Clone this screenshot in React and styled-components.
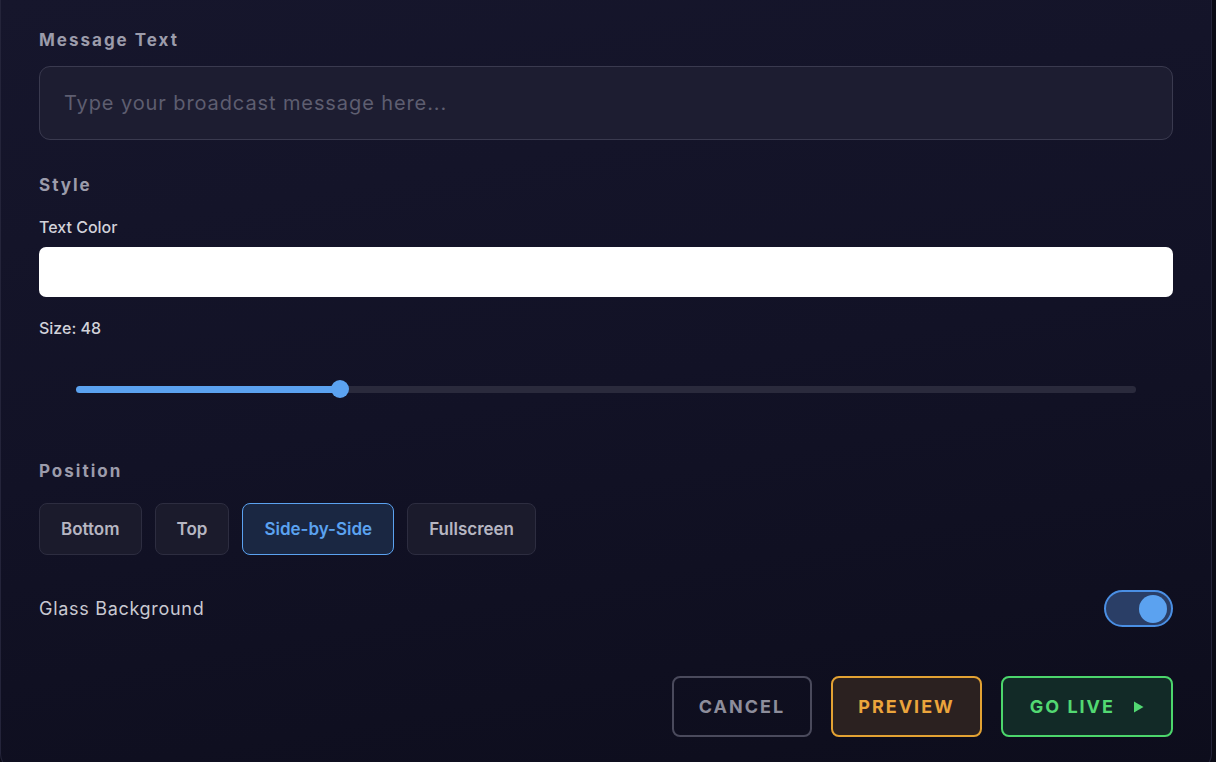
import React, { useState } from "react";
import styled, { createGlobalStyle } from "styled-components";

const GlobalStyle = createGlobalStyle`
  html, body {
    margin: 0;
    padding: 0;
    background: #0b0b16;
    font-family: Inter, "Noto Sans", "Liberation Sans", sans-serif;
  }
  * { box-sizing: border-box; }
`;

const Page = styled.div`
  width: 1216px;
  height: 762px;
  overflow: hidden;
  background: #0b0b16;
`;

const Panel = styled.div`
  width: 1212px;
  height: 770px;
  padding: 29px 38px 0 38px;
  background: linear-gradient(170deg, #16162c 0%, #121226 50%, #0d0d1c 100%);
  border: 1px solid #24243a;
  border-top: none;
  border-radius: 0 0 16px 16px;
  display: flex;
  flex-direction: column;
`;

const SectionLabel = styled.div`
  font-size: 17px;
  font-weight: 700;
  letter-spacing: 2px;
  color: #9c9cab;
  line-height: 22px;
  margin-top: ${(p) => p.$top || 0}px;
`;

const MessageInput = styled.input`
  margin-top: 15px;
  height: 74px;
  width: 100%;
  padding: 0 24px;
  border-radius: 11px;
  border: 1px solid #3a3a4f;
  background: #1d1d31;
  color: #e6e6ee;
  font-family: inherit;
  font-size: 20px;
  letter-spacing: 0.9px;
  outline: none;

  &::placeholder {
    color: #5e5e70;
  }
`;

const FieldLabel = styled.div`
  font-size: 16px;
  font-weight: 500;
  color: #d2d2da;
  line-height: 20px;
  margin-top: ${(p) => p.$top || 0}px;
`;

const ColorSwatch = styled.div`
  margin-top: 10px;
  height: 50px;
  width: 100%;
  border-radius: 7px;
  background: ${(p) => p.$color};
`;

const SliderWrap = styled.div`
  padding: 0 37px;
  margin-top: 31px;
  height: 40px;
  display: flex;
  align-items: center;
`;

const Range = styled.input`
  -webkit-appearance: none;
  appearance: none;
  width: 100%;
  height: 20px;
  margin: 0;
  background: transparent;
  outline: none;

  &::-webkit-slider-runnable-track {
    height: 7px;
    border-radius: 4px;
    background: linear-gradient(
      to right,
      #5ba2f0 0%,
      #5ba2f0 var(--fill),
      #2a2a3c var(--fill),
      #2a2a3c 100%
    );
  }

  &::-webkit-slider-thumb {
    -webkit-appearance: none;
    width: 18px;
    height: 18px;
    margin-top: -5.5px;
    border-radius: 50%;
    background: #5ba2f0;
    border: none;
  }
`;

const ButtonRow = styled.div`
  display: flex;
  gap: 13px;
  margin-top: 21px;
`;

const PositionButton = styled.button`
  height: 52px;
  padding: 0 21px;
  border-radius: 8px;
  font-family: inherit;
  font-size: 17px;
  font-weight: 600;
  cursor: pointer;
  border: 1px solid ${(p) => (p.$active ? "#5ba2f0" : "#2d2d40")};
  background: ${(p) => (p.$active ? "#1a2742" : "#1b1b2c")};
  color: ${(p) => (p.$active ? "#5ba2f0" : "#b6b6c2")};
`;

const ToggleRow = styled.div`
  display: flex;
  align-items: center;
  justify-content: space-between;
  margin-top: 35px;
`;

const ToggleLabel = styled.span`
  font-size: 18px;
  letter-spacing: 0.7px;
  color: #c9c9d2;
`;

const Switch = styled.button`
  width: 69px;
  height: 37px;
  border-radius: 19px;
  border: 2px solid ${(p) => (p.$on ? "#4a8fe4" : "#3a3a4e")};
  background: ${(p) => (p.$on ? "#2a3e66" : "#22223a")};
  padding: 2px;
  display: flex;
  justify-content: ${(p) => (p.$on ? "flex-end" : "flex-start")};
  align-items: center;
  cursor: pointer;
`;

const Knob = styled.span`
  width: 28px;
  height: 28px;
  border-radius: 50%;
  background: ${(p) => (p.$on ? "#5ba2f0" : "#8888a0")};
  margin-right: 2px;
`;

const Actions = styled.div`
  display: flex;
  justify-content: flex-end;
  gap: 19px;
  margin-top: 49px;
`;

const tones = {
  cancel: { border: "#4a4a5c", bg: "transparent", color: "#8d8d9b" },
  preview: { border: "#e3a233", bg: "#2b2120", color: "#eba53c" },
  live: { border: "#4cd66c", bg: "#122a27", color: "#52d872" },
};

const ActionButton = styled.button`
  height: 61px;
  padding: 0 ${(p) => p.$pad}px;
  border-radius: 8px;
  font-family: inherit;
  font-size: 18px;
  font-weight: 700;
  letter-spacing: 2px;
  display: flex;
  align-items: center;
  gap: 18px;
  cursor: pointer;
  border: 2px solid ${(p) => tones[p.$tone].border};
  background: ${(p) => tones[p.$tone].bg};
  color: ${(p) => tones[p.$tone].color};
`;

const positions = ["Bottom", "Top", "Side-by-Side", "Fullscreen"];

export default function App() {
  const [size, setSize] = useState(48);
  const [position, setPosition] = useState("Side-by-Side");
  const [glass, setGlass] = useState(true);
  const min = 12;
  const max = 159;
  const frac = (size - min) / (max - min);
  // track fill ends at thumb centre: 1058px track, 18px thumb
  const fill = ((9 + frac * 1040) / 1058) * 100;

  return (
    <>
      <GlobalStyle />
      <Page>
        <Panel>
          <SectionLabel>Message Text</SectionLabel>
          <MessageInput placeholder="Type your broadcast message here..." />

          <SectionLabel $top={34}>Style</SectionLabel>
          <FieldLabel $top={21}>Text Color</FieldLabel>
          <ColorSwatch $color="#ffffff" />
          <FieldLabel $top={21}>Size: {size}</FieldLabel>
          <SliderWrap>
            <Range
              type="range"
              min={min}
              max={max}
              value={size}
              onChange={(e) => setSize(Number(e.target.value))}
              style={{ "--fill": `${fill}%` }}
            />
          </SliderWrap>

          <SectionLabel $top={51}>Position</SectionLabel>
          <ButtonRow>
            {positions.map((p) => (
              <PositionButton
                key={p}
                $active={position === p}
                onClick={() => setPosition(p)}
              >
                {p}
              </PositionButton>
            ))}
          </ButtonRow>

          <ToggleRow>
            <ToggleLabel>Glass Background</ToggleLabel>
            <Switch $on={glass} onClick={() => setGlass(!glass)}>
              <Knob $on={glass} />
            </Switch>
          </ToggleRow>

          <Actions>
            <ActionButton $tone="cancel" $pad={25}>
              CANCEL
            </ActionButton>
            <ActionButton $tone="preview" $pad={25}>
              PREVIEW
            </ActionButton>
            <ActionButton $tone="live" $pad={27}>
              GO LIVE
              <svg width="11" height="12" viewBox="0 0 11 12">
                <path d="M1 0.5 L10.5 6 L1 11.5 Z" fill="currentColor" />
              </svg>
            </ActionButton>
          </Actions>
        </Panel>
      </Page>
    </>
  );
}
